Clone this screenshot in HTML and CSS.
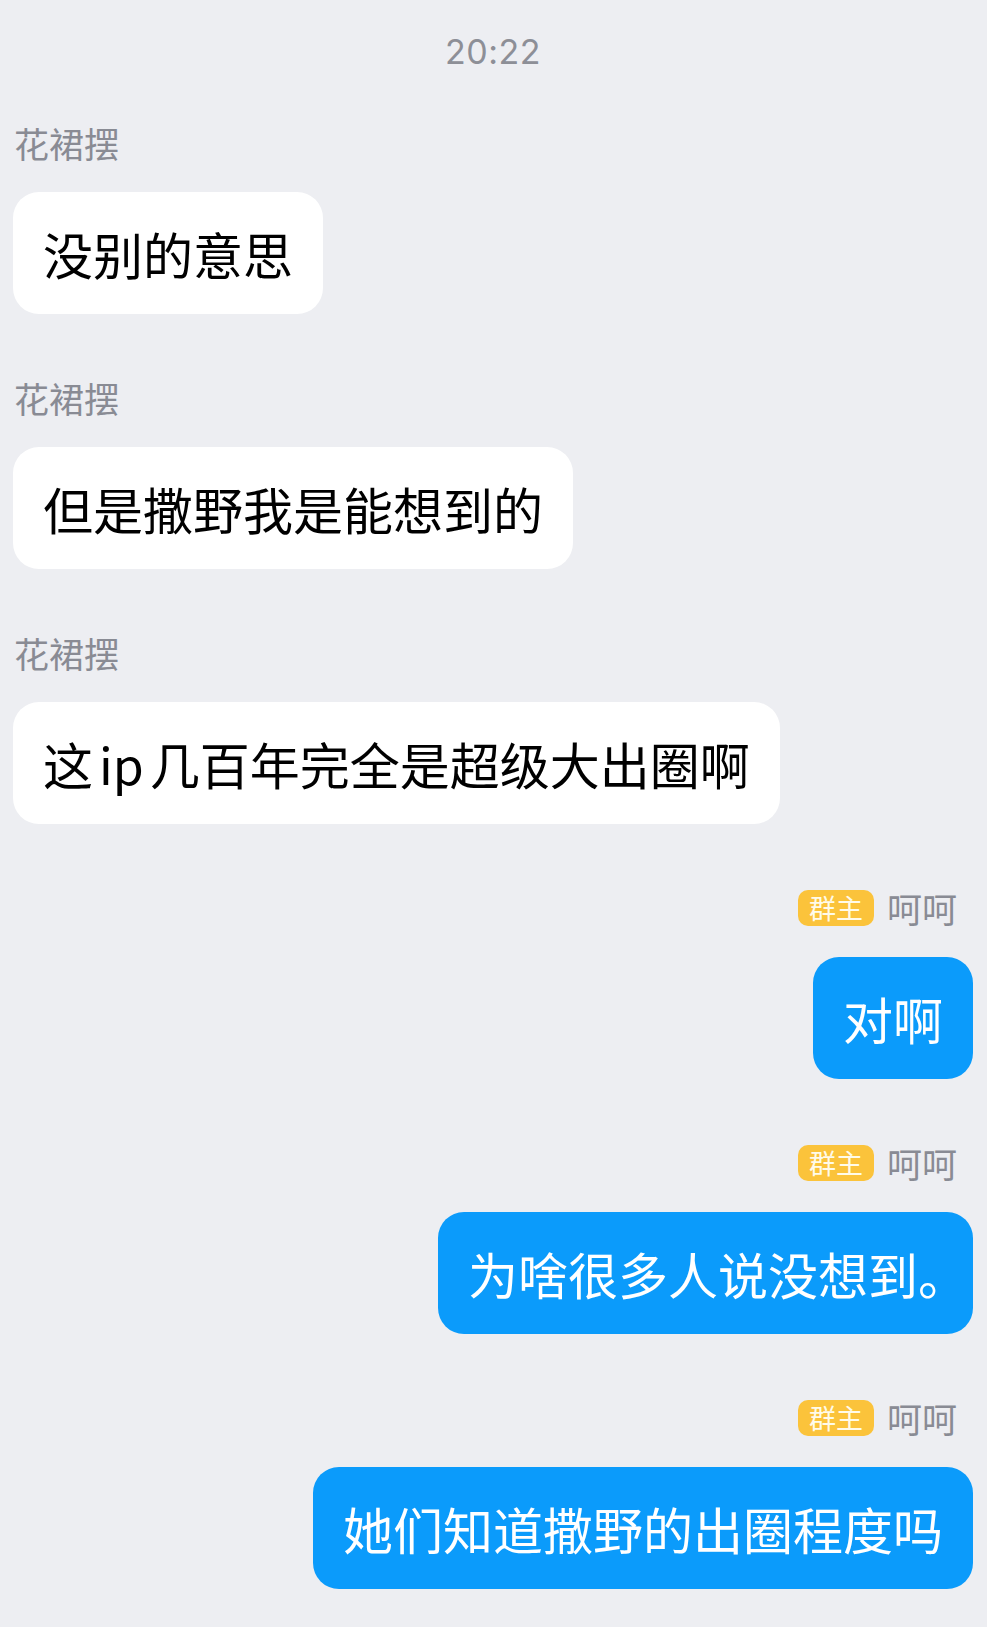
FILE: index.html
```html
<!DOCTYPE html>
<html lang="zh-CN">
<head>
  <meta charset="UTF-8" />
  <meta name="viewport" content="width=device-width, initial-scale=1.0" />
  <title>群聊</title>
  <link rel="stylesheet" href="styles.css">
</head>
<body>
  <div class="chat">
    <div class="time">20:22</div>

    <div class="msg msg-in">
      <div class="sender">花裙摆</div>
      <div class="bubble">没别的意思</div>
    </div>

    <div class="msg msg-in">
      <div class="sender">花裙摆</div>
      <div class="bubble">但是撒野我是能想到的</div>
    </div>

    <div class="msg msg-in">
      <div class="sender">花裙摆</div>
      <div class="bubble">这<span class="latin">ip</span>几百年完全是超级大出圈啊</div>
    </div>

    <div class="msg msg-out">
      <div class="sender"><span class="badge">群主</span>呵呵</div>
      <div class="bubble">对啊</div>
    </div>

    <div class="msg msg-out">
      <div class="sender"><span class="badge">群主</span>呵呵</div>
      <div class="bubble">为啥很多人说没想到<span class="punct">。</span></div>
    </div>

    <div class="msg msg-out">
      <div class="sender"><span class="badge">群主</span>呵呵</div>
      <div class="bubble">她们知道撒野的出圈程度吗</div>
    </div>
  </div>
</body>
</html>
```

FILE: styles.css
```css
body {
  background-color: #edeef2;
  margin: 0;
  font-family: "Noto Sans CJK SC", "Noto Sans", sans-serif;
}

.chat {
  display: flex;
  flex-direction: column;
  padding: 31px 14px 0 13px;
}

.time {
  font-family: Inter, "Liberation Sans", sans-serif;
  font-size: 34px;
  letter-spacing: 0.5px;
  line-height: 42px;
  color: #8d8f97;
  text-align: center;
  margin-bottom: 50px;
}

.msg {
  display: flex;
  flex-direction: column;
  margin-bottom: 64px;
}

.msg-in {
  align-items: flex-start;
}

.msg-out {
  align-items: flex-end;
}

.sender {
  display: flex;
  align-items: center;
  height: 40px;
  font-size: 35px;
  line-height: 40px;
  color: #898b94;
  margin-bottom: 29px;
}

.msg-in .sender {
  padding-left: 1px;
}

.msg-out .sender {
  padding-right: 16px;
}

.badge {
  height: 36px;
  line-height: 36px;
  padding: 0 11px;
  margin-right: 13px;
  border-radius: 10px;
  background: #fbc33b;
  color: #fffbea;
  font-size: 27px;
}

.bubble {
  font-size: 50px;
  line-height: 64px;
  padding: 29px 30px;
  border-radius: 26px;
  white-space: nowrap;
}

.msg-in .bubble {
  background: #ffffff;
  color: #000000;
}

.msg-out .bubble {
  background: #0b9bfb;
  color: #ffffff;
}

.latin {
  margin: 0 6px;
}

.punct {
  font-feature-settings: "halt";
}
```
